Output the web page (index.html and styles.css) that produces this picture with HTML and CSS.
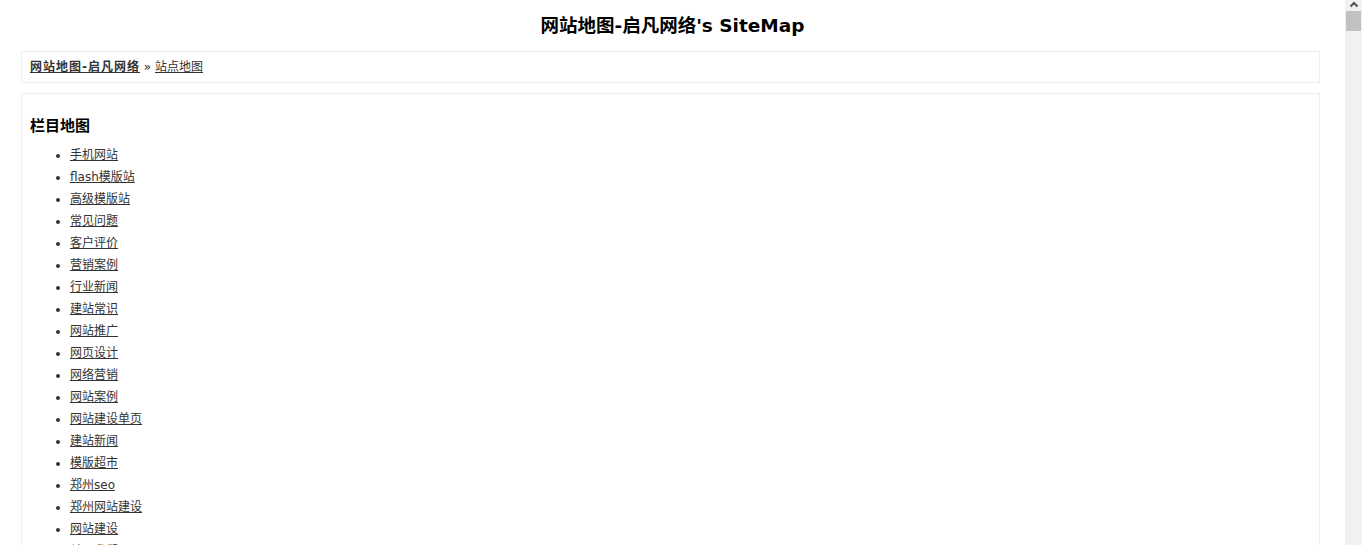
FILE: index.html
```html
<!DOCTYPE html>
<html lang="zh-CN">
<head>
<meta charset="utf-8">
<title>网站地图-启凡网络's SiteMap</title>
<link rel="stylesheet" href="styles.css">
</head>
<body>
<h1 class="title">网站地图-启凡网络's SiteMap</h1>
<div class="crumb"><a class="home" href="#">网站地图-启凡网络</a> » <a href="#">站点地图</a></div>
<div class="panel">
  <h3 class="panel-title">栏目地图</h3>
  <ul class="links">
    <li><a href="#">手机网站</a></li>
    <li><a href="#">flash模版站</a></li>
    <li><a href="#">高级模版站</a></li>
    <li><a href="#">常见问题</a></li>
    <li><a href="#">客户评价</a></li>
    <li><a href="#">营销案例</a></li>
    <li><a href="#">行业新闻</a></li>
    <li><a href="#">建站常识</a></li>
    <li><a href="#">网站推广</a></li>
    <li><a href="#">网页设计</a></li>
    <li><a href="#">网络营销</a></li>
    <li><a href="#">网站案例</a></li>
    <li><a href="#">网站建设单页</a></li>
    <li><a href="#">建站新闻</a></li>
    <li><a href="#">模版超市</a></li>
    <li><a href="#">郑州seo</a></li>
    <li><a href="#">郑州网站建设</a></li>
    <li><a href="#">网站建设</a></li>
    <li><a href="#">关于我们</a></li>
    <li><a href="#">联系我们</a></li>
    <li><a href="#">服务项目</a></li>
    <li><a href="#">公司动态</a></li>
  </ul>
  <h3 class="panel-title">文章地图</h3>
  <ul class="links">
    <li><a href="#">企业网站建设需要注意哪些问题</a></li>
    <li><a href="#">如何选择靠谱的网站建设公司</a></li>
    <li><a href="#">网站优化的基本方法</a></li>
    <li><a href="#">手机网站与响应式网站的区别</a></li>
    <li><a href="#">网站推广的常用方式</a></li>
    <li><a href="#">网页设计中的色彩搭配</a></li>
    <li><a href="#">网络营销的核心是什么</a></li>
    <li><a href="#">郑州seo优化排名技巧</a></li>
    <li><a href="#">网站建设后如何维护</a></li>
    <li><a href="#">域名与空间的选择</a></li>
    <li><a href="#">营销型网站的特点</a></li>
    <li><a href="#">网站改版需要注意什么</a></li>
  </ul>
</div>
<div class="scrollbar" aria-hidden="true">
  <svg class="scroll-arrow" width="16" height="10" viewBox="0 0 16 10"><path d="M4.5 6.5 L8 3 L11.5 6.5" fill="none" stroke="#505050" stroke-width="2"/></svg>
  <div class="scroll-thumb"></div>
</div>
</body>
</html>
```
FILE: styles.css
```css
html, body {
  margin: 0;
  padding: 0;
  background: #fff;
}
body {
  padding-right: 17px;
  font-family: "DejaVu Sans", Verdana, "Noto Sans CJK SC", sans-serif;
  font-size: 12px;
  color: #333;
}
a {
  color: #333;
  text-decoration: underline;
}
.title {
  margin: 0 0 10px;
  padding-top: 11px;
  line-height: 30px;
  font-size: 18.5px;
  font-weight: bold;
  text-align: center;
  color: #000;
}
.crumb {
  box-sizing: border-box;
  width: 1299px;
  margin: 0 0 10px 21px;
  border: 1px solid #eee;
  height: 32px;
  line-height: 31px;
  padding: 0 8px;
}
.crumb .home {
  font-weight: bold;
  letter-spacing: 1px;
}
.panel {
  box-sizing: border-box;
  width: 1299px;
  margin: 0 0 10px 21px;
  border: 1px solid #eee;
  padding: 21px 8px 10px;
}
.panel-title {
  margin: 0 0 7px;
  font-size: 15px;
  line-height: 22px;
  font-weight: bold;
  color: #000;
}
.links {
  margin: 0 0 20px;
  padding-left: 40px;
}
.links li {
  line-height: 22px;
}
.scrollbar {
  position: fixed;
  top: 0;
  right: 0;
  width: 17px;
  height: 100%;
  background: #f1f1f1;
}
.scroll-arrow {
  display: block;
  margin-left: 1px;
}
.scroll-thumb {
  margin: 1px 1px 0 1px;
  height: 20px;
  background: #c1c1c1;
}
```
